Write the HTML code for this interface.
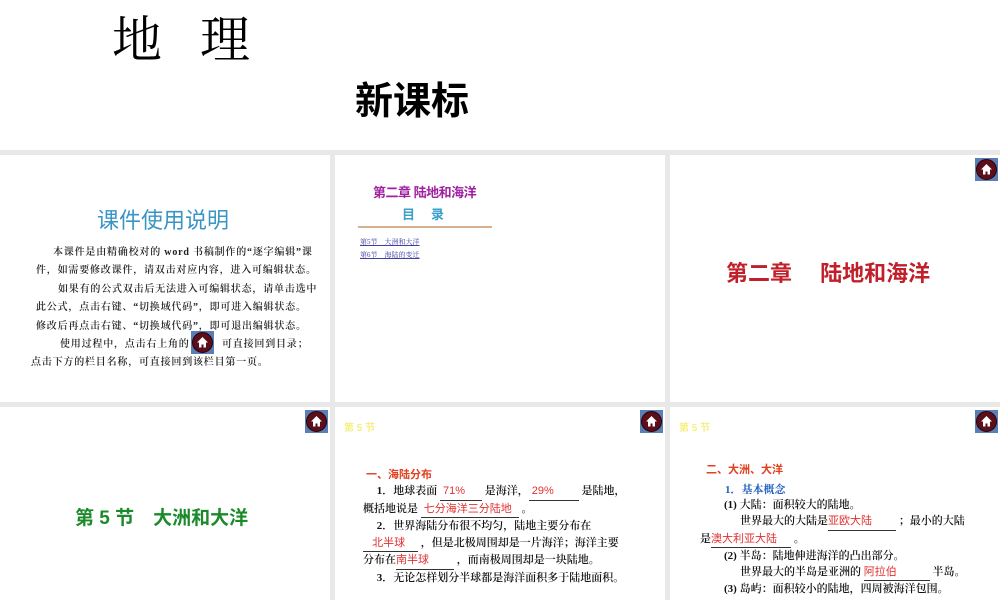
<!DOCTYPE html><html><head><meta charset="utf-8"><style>
*{margin:0;padding:0;box-sizing:border-box}
body{width:1000px;height:600px;background:#e8e8e8;position:relative;overflow:hidden;font-family:"Liberation Sans","Noto Sans CJK SC",sans-serif}
.top{position:absolute;left:0;top:0;width:1000px;height:150px;background:#fff}
.p{position:absolute;background:#fff;overflow:hidden}
.a{position:absolute;white-space:nowrap}
.home{position:absolute;width:23px;height:23px;background:#5a7fb5}
.home i{position:absolute;left:1px;top:1px;width:21px;height:21px;border-radius:50%;background:#5a0f1a;border:1px solid #2a0008}
.home svg{position:absolute;left:5px;top:5px}
.serif{font-family:"Liberation Serif","Noto Serif CJK SC",serif}
.r{color:#e03030;font-family:"Liberation Sans","Noto Sans CJK SC",sans-serif;font-weight:normal}
.u{display:inline-block;border-bottom:1px solid #333;text-align:left}
.t6 div{white-space:nowrap}
</style></head><body>
<div class="top">
<div class="a serif" style="left:112px;top:0px;font-size:50px;letter-spacing:38px">地理</div>
<div class="a" style="left:355px;top:70px;font-size:38px;font-weight:bold">新课标</div>
</div>

<div class="p" style="left:0;top:155px;width:330px;height:247px">
<div class="a" style="left:97px;top:48px;font-size:22px;color:#3a95c5">课件使用说明</div>
<div class="serif" style="position:absolute;left:0;top:89px;width:330px;font-size:10px;line-height:18.4px;color:#222;letter-spacing:0.8px;font-weight:600">
<div class="a" style="left:53px;top:0">本课件是由精确校对的 word 书稿制作的“逐字编辑”课</div>
<div class="a" style="left:36px;top:18.4px">件，如需要修改课件，请双击对应内容，进入可编辑状态。</div>
<div class="a" style="left:58px;top:36.8px">如果有的公式双击后无法进入可编辑状态，请单击选中</div>
<div class="a" style="left:36px;top:55.2px">此公式，点击右键、“切换域代码”，即可进入编辑状态。</div>
<div class="a" style="left:36px;top:73.6px">修改后再点击右键、“切换域代码”，即可退出编辑状态。</div>
<div class="a" style="left:60px;top:92px">使用过程中，点击右上角的</div>
<div class="a" style="left:222px;top:92px">可直接回到目录；</div>
<div class="a" style="left:31px;top:110.4px">点击下方的栏目名称，可直接回到该栏目第一页。</div>
</div>
<div class="home" style="left:191px;top:176px"><i></i><svg width="13" height="13" viewBox="0 0 13 13"><path d="M6.5 1L1 6.5h2v5h2.5V8.5h2v3H10v-5h2z" fill="#fff"/></svg></div>
</div>

<div class="p" style="left:335px;top:155px;width:330px;height:247px">
<div class="a" style="left:38px;top:27px;font-size:13px;color:#a020a0;letter-spacing:-0.5px;font-weight:600">第二章 陆地和海洋</div>
<div class="a" style="left:67px;top:49px;font-size:13px;font-weight:bold;color:#3aa0c8;letter-spacing:16px">目录</div>
<div class="a" style="left:23px;top:71px;width:134px;height:2px;background:#d8b090"></div>
<div class="a serif" style="left:25px;top:82px;font-size:7px;color:#4040a0;text-decoration:underline">第5节　大洲和大洋</div>
<div class="a serif" style="left:25px;top:95px;font-size:7px;color:#4040a0;text-decoration:underline">第6节　海陆的变迁</div>
</div>

<div class="p" style="left:670px;top:155px;width:330px;height:247px">
<div class="home" style="left:305px;top:3px"><i></i><svg width="13" height="13" viewBox="0 0 13 13"><path d="M6.5 1L1 6.5h2v5h2.5V8.5h2v3H10v-5h2z" fill="#fff"/></svg></div>
<div class="a" style="left:56px;top:101px;font-size:22px;font-weight:bold;color:#c0202a">第二章　 陆地和海洋</div>
</div>

<div class="p" style="left:0;top:407px;width:330px;height:193px">
<div class="home" style="left:305px;top:3px"><i></i><svg width="13" height="13" viewBox="0 0 13 13"><path d="M6.5 1L1 6.5h2v5h2.5V8.5h2v3H10v-5h2z" fill="#fff"/></svg></div>
<div class="a" style="left:75px;top:96px;font-size:19px;font-weight:bold;color:#1a8a2a">第 5 节　大洲和大洋</div>
</div>

<div class="p" style="left:335px;top:407px;width:330px;height:193px">
<div class="home" style="left:305px;top:3px"><i></i><svg width="13" height="13" viewBox="0 0 13 13"><path d="M6.5 1L1 6.5h2v5h2.5V8.5h2v3H10v-5h2z" fill="#fff"/></svg></div>
<div class="a" style="left:9px;top:12px;font-size:10px;font-weight:bold;color:#f5f080">第 5 节</div>
<div class="a" style="left:31px;top:59px;font-size:11px;font-weight:bold;color:#e04020">一、海陆分布</div>
<div class="serif t6" style="position:absolute;left:28px;top:76px;width:300px;font-size:11px;line-height:16.5px;color:#111;font-weight:600">
<div>&nbsp;&nbsp;&nbsp;&nbsp;&nbsp;1．地球表面 <span class="u r" style="width:42px">&nbsp;71%</span> 是海洋，<span class="u r" style="width:50px">&nbsp;29%</span> 是陆地，</div>
<div>概括地说是 <span class="u r" style="width:98px">&nbsp;七分海洋三分陆地</span> 。</div>
<div>&nbsp;&nbsp;&nbsp;&nbsp;&nbsp;2．世界海陆分布很不均匀，陆地主要分布在</div>
<div><span class="u r" style="width:55px">&nbsp;&nbsp;&nbsp;北半球</span> ，但是北极周围却是一片海洋；海洋主要</div>
<div>分布在<span class="u r" style="width:58px">南半球</span> ，而南极周围却是一块陆地。</div>
<div>&nbsp;&nbsp;&nbsp;&nbsp;&nbsp;3．无论怎样划分半球都是海洋面积多于陆地面积。</div>
</div>
</div>

<div class="p" style="left:670px;top:407px;width:330px;height:193px">
<div class="home" style="left:305px;top:3px"><i></i><svg width="13" height="13" viewBox="0 0 13 13"><path d="M6.5 1L1 6.5h2v5h2.5V8.5h2v3H10v-5h2z" fill="#fff"/></svg></div>
<div class="a" style="left:9px;top:12px;font-size:10px;font-weight:bold;color:#f5f080">第 5 节</div>
<div class="a" style="left:36px;top:54px;font-size:11px;font-weight:bold;color:#e04020">二、大洲、大洋</div>
<div class="a serif" style="left:55px;top:74px;font-size:11px;font-weight:bold;color:#2060c0">1．基本概念</div>
<div class="serif t6" style="position:absolute;left:0;top:90px;width:330px;font-size:11px;line-height:16.3px;color:#111;font-weight:600">
<div style="padding-left:54px">(1) 大陆：面积较大的陆地。</div>
<div style="padding-left:70px">世界最大的大陆是<span class="u r" style="width:68px">亚欧大陆</span> ；最小的大陆</div>
<div style="padding-left:30px">是<span class="u r" style="width:80px">澳大利亚大陆</span> 。</div>
<div style="padding-left:54px">(2) 半岛：陆地伸进海洋的凸出部分。</div>
<div style="padding-left:70px">世界最大的半岛是亚洲的 <span class="u r" style="width:66px">阿拉伯</span> 半岛。</div>
<div style="padding-left:54px">(3) 岛屿：面积较小的陆地，四周被海洋包围。</div>
</div>
</div>
</body></html>
